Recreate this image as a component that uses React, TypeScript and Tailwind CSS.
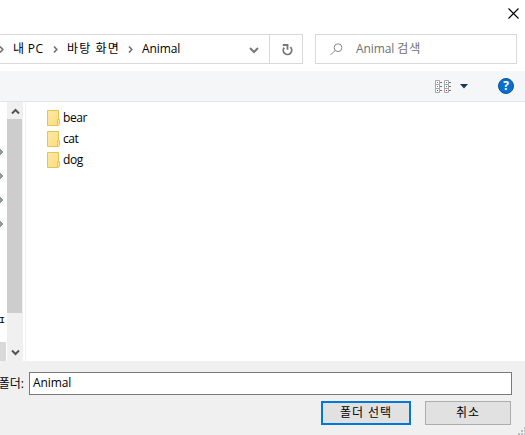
import React from 'react';

function Crumb() {
  return (
    <svg width="5" height="7" viewBox="0 0 5 7" fill="none" className="mt-px shrink-0">
      <path d="M1 .5 3.800 3.500 1 6.500" stroke="#777" strokeWidth="1.7" />
    </svg>
  );
}

function Folder({ name }: { name: string }) {
  return (
    <li className="flex h-[21px] items-center">
      <svg width="13" height="16" viewBox="0 0 13 16" className="shrink-0">
        <defs>
          <linearGradient id="folder" x1="0" y1="0" x2="1" y2="1">
            <stop offset="0" stopColor="#ffe9a3" />
            <stop offset="1" stopColor="#fbdc80" />
          </linearGradient>
        </defs>
        <path d="M.5.5h11v15H.5z" fill="url(#folder)" stroke="#e8c44f" />
        <path d="M10.5 9.500h2v5l-1 1h-1z" fill="#ffe697" stroke="#e8c44f" />
      </svg>
      <span className="ml-[3px] leading-4 tracking-[-0.45px]">{name}</span>
    </li>
  );
}

function Pin() {
  return (
    <svg width="3" height="8" viewBox="0 0 3 8" className="block">
      <path d="M0 1h1v1h1v1h1v2H2v1H1v1H0z" fill="#8f999e" />
    </svg>
  );
}

function ViewColumn({ x }: { x: number }) {
  return (
    <g transform={`translate(${x} 0)`}>
      <path d="M.5.5h4v12h-4zM.5 4.500h4M.5 8.500h4" fill="#fff" stroke="#a8a8a8" />
      <path d="M5 2.500h2M5 6.500h2M5 10.500h2" stroke="#777" />
      <path d="M2 2h1v1H2z" fill="#777" />
      <path d="M2 6h1v1H2z" fill="#2b93d1" />
      <path d="M2 10h1v1H2z" fill="#d22" />
    </g>
  );
}

export default function App() {
  return (
    <div className="flex h-[435px] w-[525px] flex-col overflow-hidden bg-white font-['Open_Sans','Noto_Sans_CJK_KR',sans-serif] text-[12px] leading-4 text-black">
      <header className="flex h-[34px] shrink-0 justify-end pt-2 pr-[6px]">
        <svg width="11" height="11" viewBox="0 0 11 11" fill="none">
          <path d="m.5.5 10 10m0-10-10 10" stroke="#000" strokeWidth="1.1" />
        </svg>
      </header>

      <nav className="flex h-[37px] shrink-0 pb-[7px]">
        <div className="flex w-[303px] border border-l-0 border-[#d9d9d9]">
          <div className="flex w-[269px] items-center">
            <div className="-ml-px flex w-[14px]"><Crumb /></div>
            <span className="w-[40px] whitespace-nowrap tracking-[0.35px]">내 PC</span>
            <Crumb />
            <span className="ml-[9px] w-[61px] whitespace-nowrap tracking-[1.1px]">바탕 화면</span>
            <Crumb />
            <span className="ml-[9px] tracking-[-0.1px]">Animal</span>
            <svg className="mt-0.5 mr-[10px] ml-auto" width="10" height="7" viewBox="0 0 10 7" fill="none">
              <path d="m1 1 4 4 4-4" stroke="#777" strokeWidth="2" />
            </svg>
          </div>
          <div className="flex w-[33px] items-center justify-center border-l border-[#d9d9d9]">
            <svg className="mt-px ml-[2px]" width="11" height="12" viewBox="0 0 11 12" fill="none">
              <path d="M8.400 3.200A4.200 4.200 0 1 1 2.200 3.600" stroke="#777" strokeWidth="1.800" />
              <path d="M.8 1h4.700v4.700" stroke="#777" strokeWidth="1.800" />
            </svg>
          </div>
        </div>
        <div className="ml-3 flex w-[202px] items-center border border-[#d9d9d9] pl-[14px] text-[#707070]">
          <svg width="13" height="13" viewBox="0 0 13 13" fill="none" stroke="#8b8790">
            <circle cx="8" cy="4.700" r="3.900" />
            <path d="M5 7.500.5 12" />
          </svg>
          <span className="ml-[13px] tracking-[-0.1px]">Animal <span className="tracking-[1px]">검색</span></span>
        </div>
      </nav>

      <div className="flex h-[31px] shrink-0 items-center justify-end border-b border-[#e3e6e9] bg-[#f4f6f8] pr-[11px]">
        <svg width="16" height="13" viewBox="0 0 16 13">
          <ViewColumn x={0} />
          <ViewColumn x={9} />
        </svg>
        <svg className="ml-[9px]" width="8" height="5" viewBox="0 0 8 5">
          <path d="M0 0h8L4 4.500z" fill="#193661" />
        </svg>
        <div className="ml-[30px] flex size-4 items-center justify-center rounded-full border border-[#07549a] bg-[#0870cc] text-[12px] leading-none font-bold text-white">?</div>
      </div>

      <main className="flex h-[259px] shrink-0">
        <aside className="flex w-[7px] flex-col overflow-hidden pt-[46px]">
          <div className="flex flex-col gap-4">
            <Pin /><Pin /><Pin /><Pin />
          </div>
          <span className="mt-[85px] -ml-[5px] h-4 w-4 shrink-0">ㅍ</span>
          <div className="mt-auto h-[19px] w-[6px] bg-[#d9d9d9]" />
        </aside>
        <div className="flex w-4 flex-col items-center bg-[#f0f0f0]">
          <svg className="mt-[6px] shrink-0" width="9" height="7" viewBox="0 0 9 7" fill="none">
            <path d="m1 5.500 3.500-3.500L8 5.500" stroke="#555" strokeWidth="2" />
          </svg>
          <div className="mt-1 mr-px h-[194px] w-[15px] bg-[#cdcdcd]" />
          <svg className="mt-auto mb-[5px] shrink-0" width="9" height="7" viewBox="0 0 9 7" fill="none">
            <path d="m1 1.500 3.500 3.500L8 1.500" stroke="#555" strokeWidth="2" />
          </svg>
        </div>
        <ul className="ml-[2px] flex-1 border-l border-[#f2f2f2] pt-[5px] pl-[21px]">
          <Folder name="bear" />
          <Folder name="cat" />
          <Folder name="dog" />
        </ul>
      </main>

      <footer className="relative h-[74px] bg-[#f0f0f0] pt-[11px]">
        <div className="flex items-center">
          <div className="flex w-[29px] justify-end pr-[5px] whitespace-nowrap">폴더:</div>
          <div className="flex h-[23px] w-[483px] items-center border border-[#7a7a7a] bg-white pb-px pl-[3px] tracking-[-0.1px]">Animal</div>
        </div>
        <div className="mt-[6px] flex justify-end gap-[14px] pr-[14px]">
          <button className="h-6 w-[90px] border-2 border-[#0078d7] bg-[#e1e1e1] leading-5 tracking-[0.9px]">폴더 선택</button>
          <button className="h-6 w-[86px] border border-[#adadad] bg-[#e1e1e1] leading-[22px] tracking-[0.9px]">취소</button>
        </div>
        <svg className="absolute right-0 bottom-0" width="7" height="9" viewBox="0 0 7 9">
          <path d="M6 1h2v2H6zM3 4h2v2H3zM6 4h2v2H6zM0 7h2v2H0zM3 7h2v2H3zM6 7h2v2H6z" fill="#bdbdbd" />
        </svg>
      </footer>
    </div>
  );
}
